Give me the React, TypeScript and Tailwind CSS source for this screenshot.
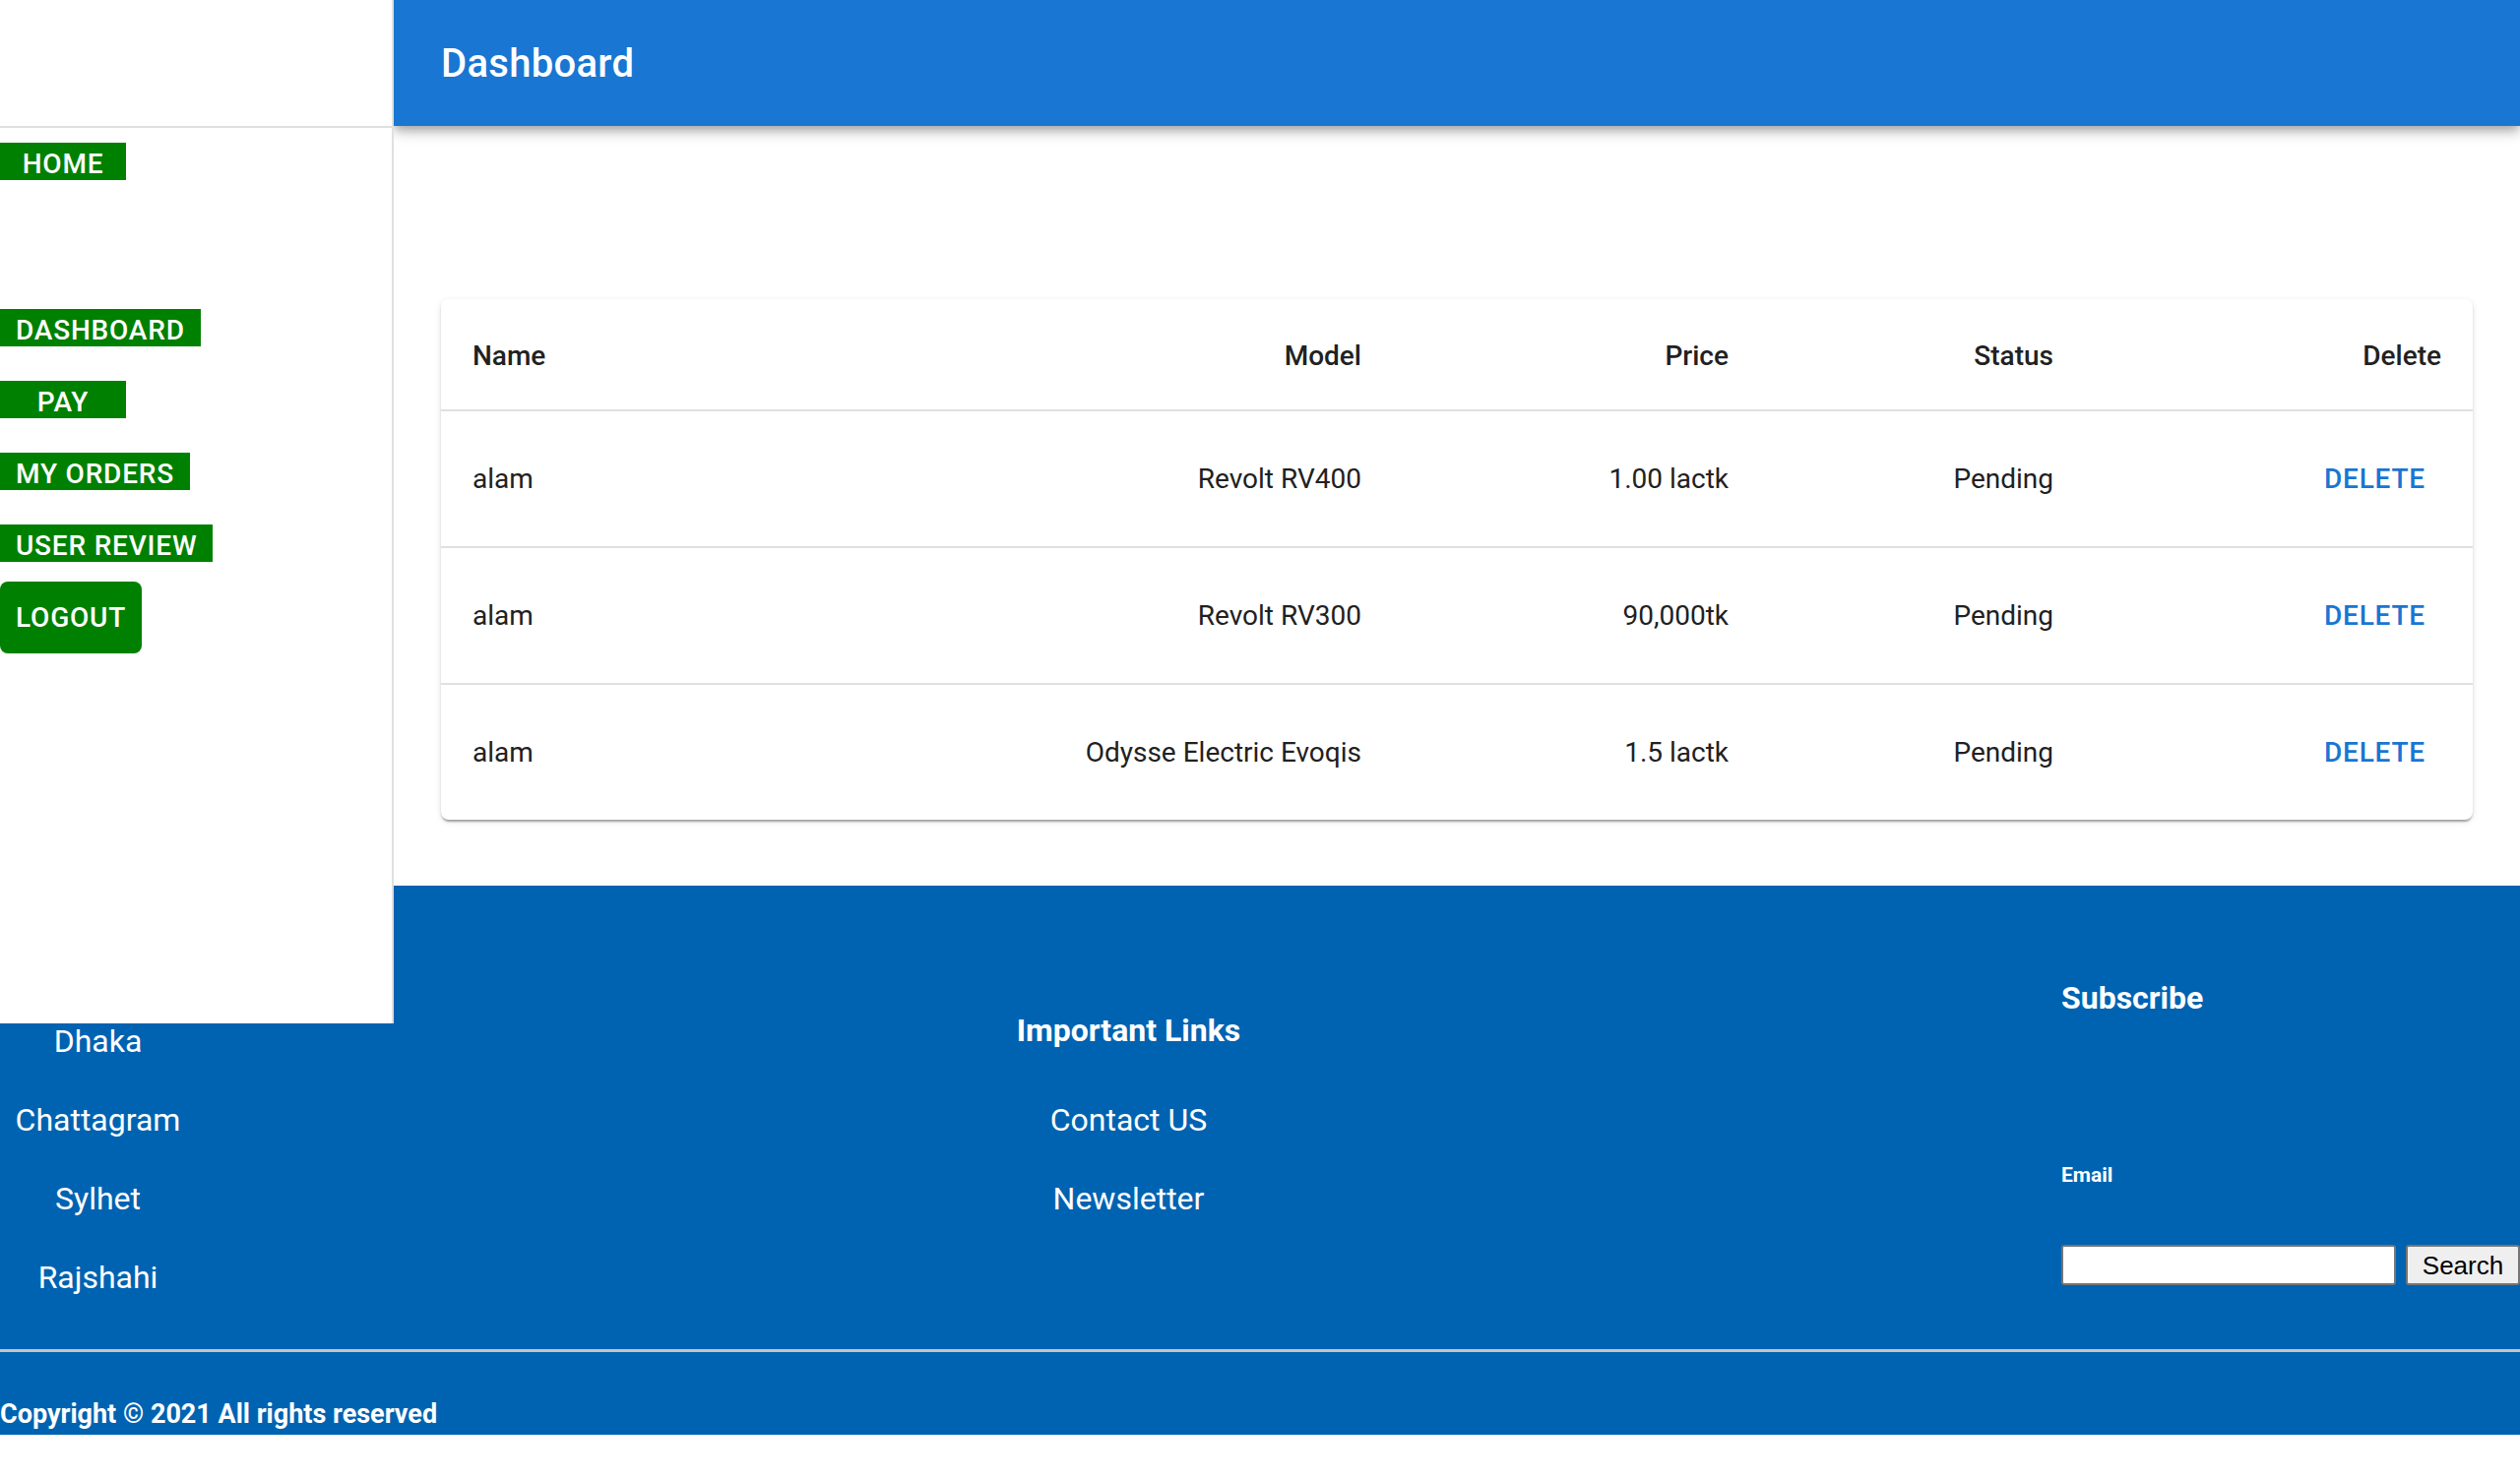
import React from "react";

interface Order {
	id: number;
	name: string;
	model: string;
	price: string;
	status: string;
}

const orders: Order[] = [
	{ id: 1, name: "alam", model: "Revolt RV400", price: "1.00 lactk", status: "Pending" },
	{ id: 2, name: "alam", model: "Revolt RV300", price: "90,000tk", status: "Pending" },
	{ id: 3, name: "alam", model: "Odysse Electric Evoqis", price: "1.5 lactk", status: "Pending" },
];

const navLinks = [
	{ label: "Dashboard", gap: "mt-[131px]" },
	{ label: "Pay", gap: "mt-[35px]" },
	{ label: "My Orders", gap: "mt-[35px]" },
	{ label: "User Review", gap: "mt-[35px]" },
];

const NavLabel: React.FC<{ label: string; className?: string }> = ({ label, className = "" }) => (
	<a
		href="#"
		className={`inline-flex h-[38px] min-w-[128px] items-center justify-center bg-[#008000] px-4 pt-[5px] text-[28px] font-medium uppercase tracking-[0.8px] text-white ${className}`}
	>
		{label}
	</a>
);

const Sidebar: React.FC = () => (
	<aside className="absolute left-0 top-0 z-10 h-[1040px] w-[400px] border-r-2 border-[#e0e0e0] bg-white">
		<div className="h-[130px] border-b-2 border-[#e0e0e0]" />
		<nav className="flex flex-col items-start">
			<NavLabel label="Home" className="mt-[15px]" />
			{navLinks.map((link) => (
				<NavLabel key={link.label} label={link.label} className={link.gap} />
			))}
			<button className="mt-[20px] h-[73px] rounded-[8px] bg-[#008000] px-4 text-[28px] font-medium uppercase tracking-[0.8px] text-white">
				Logout
			</button>
		</nav>
	</aside>
);

const OrdersTable: React.FC = () => (
	<div className="overflow-hidden rounded-[8px] bg-white shadow-[0_4px_2px_-2px_rgba(0,0,0,0.2),0_2px_2px_0_rgba(0,0,0,0.14),0_2px_6px_0_rgba(0,0,0,0.12)]">
		<table className="w-full table-fixed border-collapse text-[28px] text-[#212121]">
			<colgroup>
				<col className="w-[484px]" />
				<col className="w-[483px]" />
				<col className="w-[373px]" />
				<col className="w-[330px]" />
				<col />
			</colgroup>
			<thead>
				<tr className="border-b-2 border-[#e0e0e0]">
					<th className="px-8 pb-[30px] pt-[34px] text-left font-medium leading-[48px]">Name</th>
					<th className="px-8 pb-[30px] pt-[34px] text-right font-medium leading-[48px]">Model</th>
					<th className="px-8 pb-[30px] pt-[34px] text-right font-medium leading-[48px]">Price</th>
					<th className="px-8 pb-[30px] pt-[34px] text-right font-medium leading-[48px]">Status</th>
					<th className="px-8 pb-[30px] pt-[34px] text-right font-medium leading-[48px]">Delete</th>
				</tr>
			</thead>
			<tbody>
				{orders.map((order, index) => (
					<tr
						key={order.id}
						className={index === orders.length - 1 ? "" : "border-b-2 border-[#e0e0e0]"}
					>
						<td className="px-8 py-8 text-left leading-[40px]">{order.name}</td>
						<td className="px-8 py-8 text-right leading-[40px]">{order.model}</td>
						<td className="px-8 py-8 text-right leading-[40px]">{order.price}</td>
						<td className="px-8 py-8 text-right leading-[40px]">{order.status}</td>
						<td className="px-8 py-8 text-right">
							<button className="h-[73px] rounded-[8px] px-4 text-[28px] font-medium uppercase tracking-[0.8px] text-[#1976d2]">
								Delete
							</button>
						</td>
					</tr>
				))}
			</tbody>
		</table>
	</div>
);

const Footer: React.FC = () => (
	<footer className="w-full bg-[#0063b1] text-white">
		<div className="flex items-start justify-between">
			<div className="mt-[134px] flex w-[199px] flex-col gap-[32px] text-center text-[32px] leading-[48px]">
				<span>Dhaka</span>
				<span>Chattagram</span>
				<span>Sylhet</span>
				<span>Rajshahi</span>
			</div>

			<div className="mt-[123px] flex flex-col items-center text-center text-[32px] leading-[48px]">
				<h3 className="font-bold">Important Links</h3>
				<a href="#" className="mt-[43px]">Contact US</a>
				<a href="#" className="mt-[32px]">Newsletter</a>
			</div>

			<div className="mt-[90px] flex w-[466px] flex-col items-start">
				<h3 className="text-[32px] font-bold leading-[48px]">Subscribe</h3>
				<label className="mt-[141px] text-[21px] font-bold leading-[30px]">Email</label>
				<div className="mt-[56px] flex gap-[10px]">
					<input
						type="text"
						className="h-[41px] w-[340px] rounded-[3px] border-2 border-[#767676] bg-white px-2 text-black outline-none"
					/>
					<button className="h-[41px] w-[116px] rounded-[3px] border-2 border-[#767676] bg-[#efefef] font-['Liberation_Sans',Arial,sans-serif] text-[26px] text-black">
						Search
					</button>
				</div>
			</div>
		</div>

		<div className="mt-[49px] h-[3px] bg-[#c4c4c4]" />

		<p className="mt-[47px] pb-[5px] text-[27px] font-bold leading-[32px]">
			Copyright © 2021 All rights reserved
		</p>
	</footer>
);

export default function App() {
	return (
		<div className="relative min-h-screen w-full bg-white font-['Roboto','Noto_Sans',sans-serif]">
			<Sidebar />

			<div className="pl-[400px]">
				<header className="relative z-[5] flex h-[128px] items-center bg-[#1976d2] px-[48px] shadow-[0_4px_8px_-2px_rgba(0,0,0,0.2),0_8px_10px_0_rgba(0,0,0,0.14),0_2px_20px_0_rgba(0,0,0,0.12)]">
					<h1 className="pt-[2px] text-[40px] font-medium leading-[64px] tracking-[0.3px] text-white">
						Dashboard
					</h1>
				</header>

				<main className="px-[48px] pb-[67px] pt-[176px]">
					<OrdersTable />
				</main>
			</div>

			<Footer />
		</div>
	);
}
